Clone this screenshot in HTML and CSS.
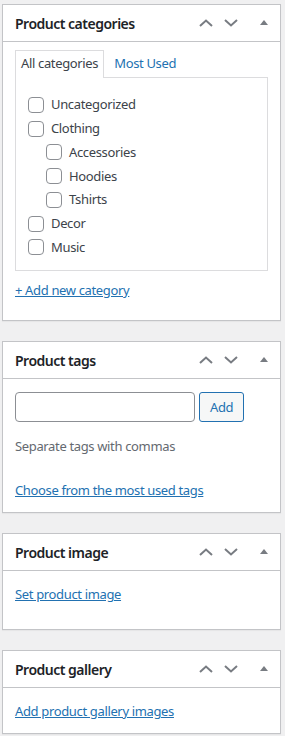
FILE: index.html
```html
<!DOCTYPE html>
<html>
<head>
    <title>Product sidebar</title>
    <link rel="stylesheet" href="styles.css">
</head>
<body>
    <div class="sidebar">
        <!-- Categories -->
        <div class="postbox">
            <div class="postbox-header">
                <h2>Product categories</h2>
                <div class="handle-actions">
                    <button class="handle-btn"><svg width="14" height="8" viewBox="0 0 14 8"><polyline points="1,7 7,1.5 13,7" fill="none" stroke="#787c82" stroke-width="2"/></svg></button>
                    <button class="handle-btn"><svg width="14" height="8" viewBox="0 0 14 8"><polyline points="1,1 7,6.5 13,1" fill="none" stroke="#787c82" stroke-width="2"/></svg></button>
                    <button class="handle-btn toggle"><svg width="8" height="5" viewBox="0 0 8 5"><polygon points="0,5 4,0 8,5" fill="#787c82"/></svg></button>
                </div>
            </div>
            <div class="inside cat-inside">
                <ul class="category-tabs">
                    <li class="tab active">All categories</li>
                    <li class="tab"><a href="#">Most Used</a></li>
                </ul>
                <div class="tabs-panel">
                    <ul class="checklist">
                        <li><label><span class="checkbox"></span>Uncategorized</label></li>
                        <li><label><span class="checkbox"></span>Clothing</label>
                            <ul class="children">
                                <li><label><span class="checkbox"></span>Accessories</label></li>
                                <li><label><span class="checkbox"></span>Hoodies</label></li>
                                <li><label><span class="checkbox"></span>Tshirts</label></li>
                            </ul>
                        </li>
                        <li><label><span class="checkbox"></span>Decor</label></li>
                        <li><label><span class="checkbox"></span>Music</label></li>
                    </ul>
                </div>
                <a href="#" class="add-link">+ Add new category</a>
            </div>
        </div>

        <!-- Tags -->
        <div class="postbox">
            <div class="postbox-header">
                <h2>Product tags</h2>
                <div class="handle-actions">
                    <button class="handle-btn"><svg width="14" height="8" viewBox="0 0 14 8"><polyline points="1,7 7,1.5 13,7" fill="none" stroke="#787c82" stroke-width="2"/></svg></button>
                    <button class="handle-btn"><svg width="14" height="8" viewBox="0 0 14 8"><polyline points="1,1 7,6.5 13,1" fill="none" stroke="#787c82" stroke-width="2"/></svg></button>
                    <button class="handle-btn toggle"><svg width="8" height="5" viewBox="0 0 8 5"><polygon points="0,5 4,0 8,5" fill="#787c82"/></svg></button>
                </div>
            </div>
            <div class="inside tags-inside">
                <div class="tag-row">
                    <input type="text" class="tag-input">
                    <button class="button">Add</button>
                </div>
                <p class="howto">Separate tags with commas</p>
                <a href="#" class="tag-cloud-link">Choose from the most used tags</a>
            </div>
        </div>

        <!-- Image -->
        <div class="postbox">
            <div class="postbox-header">
                <h2>Product image</h2>
                <div class="handle-actions">
                    <button class="handle-btn"><svg width="14" height="8" viewBox="0 0 14 8"><polyline points="1,7 7,1.5 13,7" fill="none" stroke="#787c82" stroke-width="2"/></svg></button>
                    <button class="handle-btn"><svg width="14" height="8" viewBox="0 0 14 8"><polyline points="1,1 7,6.5 13,1" fill="none" stroke="#787c82" stroke-width="2"/></svg></button>
                    <button class="handle-btn toggle"><svg width="8" height="5" viewBox="0 0 8 5"><polygon points="0,5 4,0 8,5" fill="#787c82"/></svg></button>
                </div>
            </div>
            <div class="inside simple-inside">
                <a href="#">Set product image</a>
            </div>
        </div>

        <!-- Gallery -->
        <div class="postbox">
            <div class="postbox-header">
                <h2>Product gallery</h2>
                <div class="handle-actions">
                    <button class="handle-btn"><svg width="14" height="8" viewBox="0 0 14 8"><polyline points="1,7 7,1.5 13,7" fill="none" stroke="#787c82" stroke-width="2"/></svg></button>
                    <button class="handle-btn"><svg width="14" height="8" viewBox="0 0 14 8"><polyline points="1,1 7,6.5 13,1" fill="none" stroke="#787c82" stroke-width="2"/></svg></button>
                    <button class="handle-btn toggle"><svg width="8" height="5" viewBox="0 0 8 5"><polygon points="0,5 4,0 8,5" fill="#787c82"/></svg></button>
                </div>
            </div>
            <div class="inside gallery-inside">
                <a href="#">Add product gallery images</a>
            </div>
        </div>
    </div>
</body>
</html>
```

FILE: styles.css
```css
body {
    margin: 0;
    background-color: #f0f0f1;
    font-family: "Noto Sans", "Open Sans", sans-serif;
    font-size: 13px;
    line-height: 19px;
    letter-spacing: -0.35px;
    color: #3c434a;
}
a {
    color: #2271b1;
    text-decoration: underline;
}
ul {
    list-style: none;
    margin: 0;
    padding: 0;
}
.sidebar {
    padding: 4px 4px 0 2px;
}
.postbox {
    background: #fff;
    border: 1px solid #c3c4c7;
    margin-bottom: 20px;
    box-shadow: 0 1px 1px rgba(0, 0, 0, 0.04);
}
.postbox-header {
    display: flex;
    align-items: center;
    justify-content: space-between;
    height: 36px;
    border-bottom: 1px solid #c3c4c7;
}
.postbox-header h2 {
    margin: 0;
    padding: 0 12px;
    font-size: 14px;
    font-weight: 600;
    letter-spacing: -0.5px;
    color: #1d2327;
}
.handle-actions {
    display: flex;
    height: 36px;
}
.handle-btn {
    width: 26px;
    height: 36px;
    padding: 0;
    border: none;
    background: none;
    display: flex;
    align-items: center;
    justify-content: center;
    cursor: pointer;
}
.handle-btn:first-child {
    padding-left: 2px;
}
.handle-btn.toggle {
    width: 36px;
    padding-left: 3px;
    padding-bottom: 2px;
}
.inside {
    padding: 0 12px;
}
.cat-inside {
    padding-top: 8px;
    padding-bottom: 20px;
}
.category-tabs {
    display: flex;
}
.tab {
    padding: 3px 5px 5px;
    margin-left: 4px;
    border: 1px solid transparent;
    border-bottom: none;
}
.tab.active {
    border-color: #dcdcde;
    background: #fff;
    position: relative;
    z-index: 1;
    margin-left: 0;
}
.tab a {
    text-decoration: none;
}
.tabs-panel {
    border: 1px solid #dcdcde;
    margin-top: -1px;
    padding: 15px 12px 11px;
}
.checklist li label {
    display: flex;
    align-items: center;
    height: 23.75px;
}
.checklist .children {
    padding-left: 18px;
}
.checkbox {
    width: 14px;
    height: 14px;
    border: 1px solid #8c8f94;
    border-radius: 4px;
    margin-right: 7px;
    flex-shrink: 0;
}
.add-link {
    display: inline-block;
    margin-top: 10px;
}
.tags-inside {
    padding-top: 13px;
    padding-bottom: 12px;
}
.tag-row {
    display: flex;
    gap: 4px;
}
.tag-input {
    width: 180px;
    height: 30px;
    box-sizing: border-box;
    border: 1px solid #8c8f94;
    border-radius: 4px;
    margin: 0;
}
.button {
    height: 30px;
    padding: 0 10px;
    border: 1px solid #2271b1;
    border-radius: 3px;
    background: #f6f7f7;
    color: #2271b1;
    font-family: inherit;
    font-size: 13px;
    letter-spacing: inherit;
}
.howto {
    margin: 15px 0 25px;
    color: #646970;
}
.tag-cloud-link {
    display: inline-block;
}
.simple-inside {
    padding-top: 14px;
    padding-bottom: 25px;
}
.gallery-inside {
    padding-top: 14px;
    padding-bottom: 12px;
}
```
